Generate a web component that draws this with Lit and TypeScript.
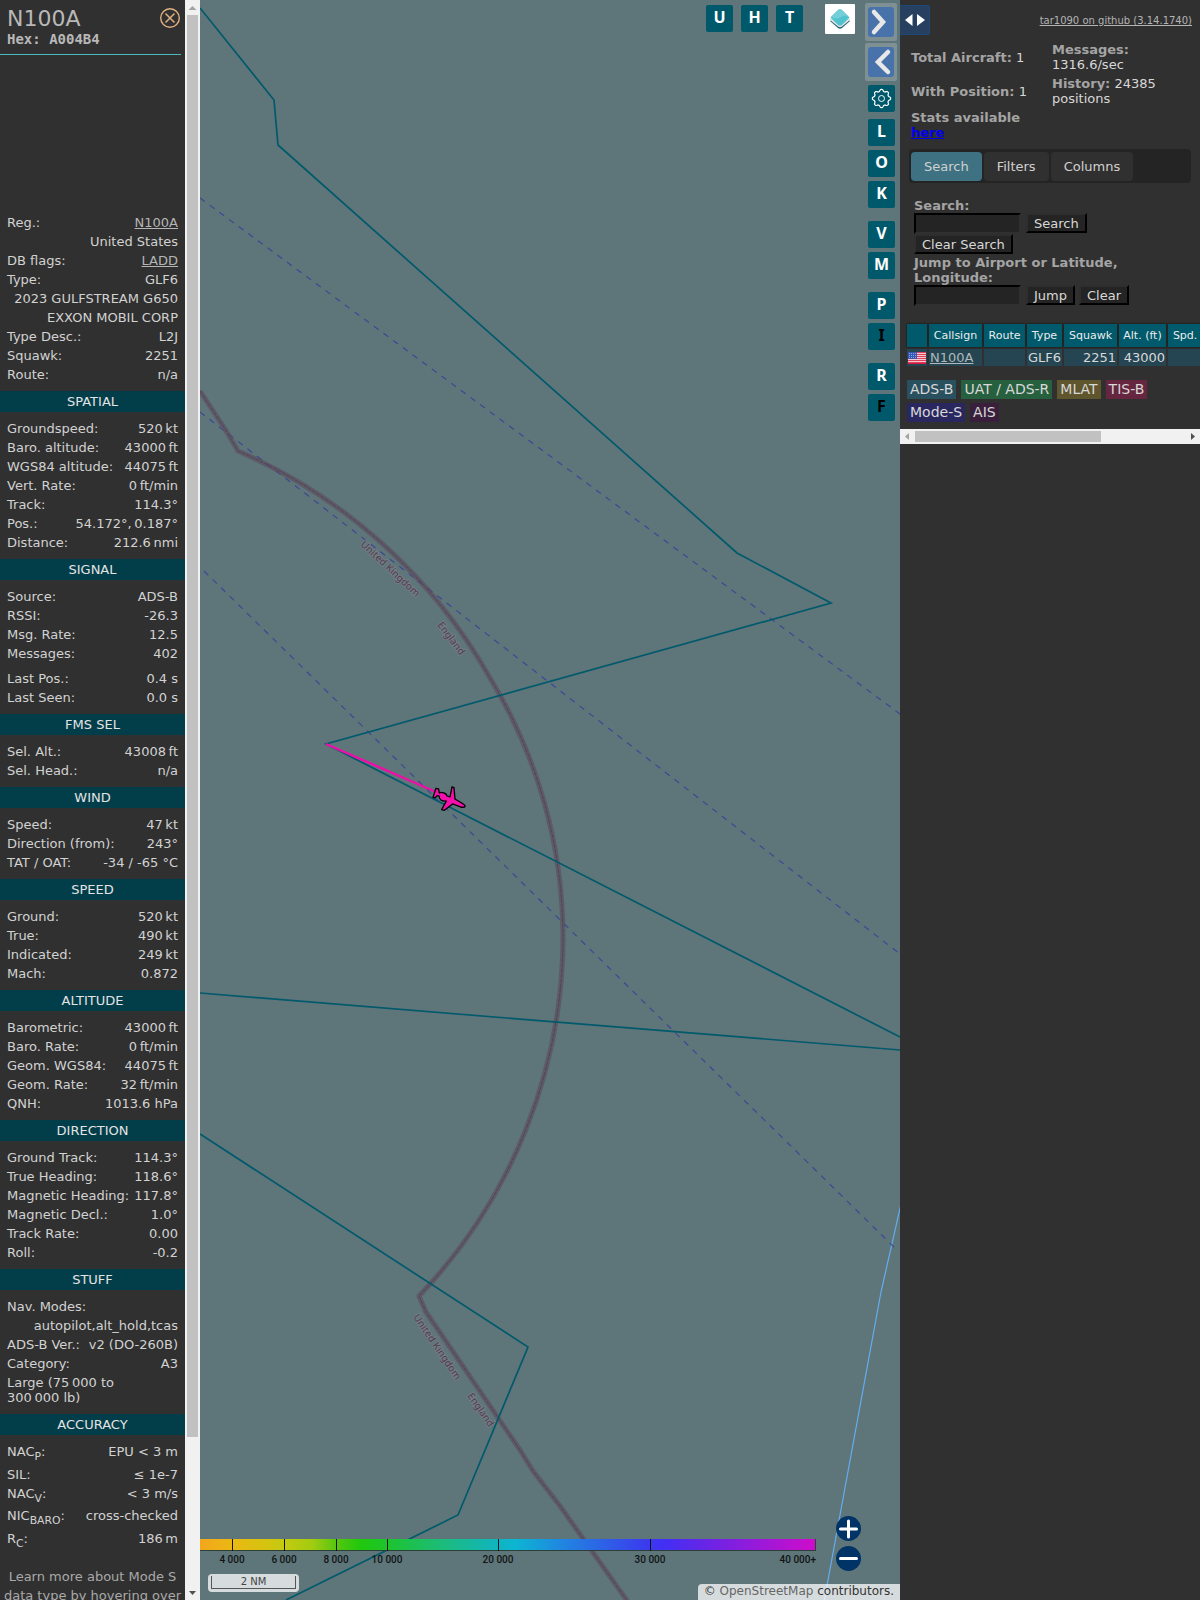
import { LitElement, html, css, svg } from "lit";
import { customElement } from "lit/decorators.js";
import { classMap } from "lit/directives/class-map.js";

type Row = { label?: unknown; value?: unknown; gap?: boolean };
type Section = { title?: string; rows: Row[] };

const thin = "\u2009";

const sections: Section[] = [
  {
    rows: [
      { label: "Reg.:", value: html`<a href="#reg">N100A</a>` },
      { value: "United States" },
      { label: "DB flags:", value: html`<a href="#ladd">LADD</a>` },
      { label: "Type:", value: "GLF6" },
      { value: "2023 GULFSTREAM G650" },
      { value: "EXXON MOBIL CORP" },
      { label: "Type Desc.:", value: "L2J" },
      { label: "Squawk:", value: "2251" },
      { label: "Route:", value: "n/a" },
    ],
  },
  {
    title: "SPATIAL",
    rows: [
      { label: "Groundspeed:", value: `520${thin}kt` },
      { label: "Baro. altitude:", value: `43000${thin}ft` },
      { label: "WGS84 altitude:", value: `44075${thin}ft` },
      { label: "Vert. Rate:", value: `0${thin}ft/min` },
      { label: "Track:", value: "114.3°" },
      { label: "Pos.:", value: `54.172°,${thin}0.187°` },
      { label: "Distance:", value: `212.6${thin}nmi` },
    ],
  },
  {
    title: "SIGNAL",
    rows: [
      { label: "Source:", value: "ADS-B" },
      { label: "RSSI:", value: "-26.3" },
      { label: "Msg. Rate:", value: "12.5" },
      { label: "Messages:", value: "402" },
      { label: "Last Pos.:", value: "0.4 s", gap: true },
      { label: "Last Seen:", value: "0.0 s" },
    ],
  },
  {
    title: "FMS SEL",
    rows: [
      { label: "Sel. Alt.:", value: `43008${thin}ft` },
      { label: "Sel. Head.:", value: "n/a" },
    ],
  },
  {
    title: "WIND",
    rows: [
      { label: "Speed:", value: `47${thin}kt` },
      { label: "Direction (from):", value: "243°" },
      { label: "TAT / OAT:", value: "-34 / -65 °C" },
    ],
  },
  {
    title: "SPEED",
    rows: [
      { label: "Ground:", value: `520${thin}kt` },
      { label: "True:", value: `490${thin}kt` },
      { label: "Indicated:", value: `249${thin}kt` },
      { label: "Mach:", value: "0.872" },
    ],
  },
  {
    title: "ALTITUDE",
    rows: [
      { label: "Barometric:", value: `43000${thin}ft` },
      { label: "Baro. Rate:", value: `0${thin}ft/min` },
      { label: "Geom. WGS84:", value: `44075${thin}ft` },
      { label: "Geom. Rate:", value: `32${thin}ft/min` },
      { label: "QNH:", value: "1013.6 hPa" },
    ],
  },
  {
    title: "DIRECTION",
    rows: [
      { label: "Ground Track:", value: "114.3°" },
      { label: "True Heading:", value: "118.6°" },
      { label: "Magnetic Heading:", value: "117.8°" },
      { label: "Magnetic Decl.:", value: "1.0°" },
      { label: "Track Rate:", value: "0.00" },
      { label: "Roll:", value: "-0.2" },
    ],
  },
  {
    title: "STUFF",
    rows: [
      { label: "Nav. Modes:" },
      { value: "autopilot,alt_hold,tcas" },
      { label: "ADS-B Ver.:", value: "v2 (DO-260B)" },
      { label: "Category:", value: "A3" },
      { label: html`Large (75${thin}000 to<br />300${thin}000 lb)` },
    ],
  },
  {
    title: "ACCURACY",
    rows: [
      { label: html`NAC<sub>P</sub>:`, value: "EPU < 3 m" },
      { label: "SIL:", value: "≤ 1e-7" },
      { label: html`NAC<sub>V</sub>:`, value: "< 3 m/s" },
      { label: html`NIC<sub>BARO</sub>:`, value: "cross-checked" },
      { label: html`R<sub>C</sub>:`, value: `186${thin}m` },
    ],
  },
];

@customElement("info-panel")
class InfoPanel extends LitElement {
  static styles = css`
    :host {
      display: flex;
      flex: none;
      width: 200px;
      min-height: 0;
      overflow: hidden;
      background: #303030;
      color: #d2d2d2;
      font: 13px/15px "DejaVu Sans", Verdana, sans-serif;
    }
    a { color: #b5b5b5; }
    .content { flex: 1; min-width: 0; overflow: hidden; }
    .head {
      display: flex;
      justify-content: space-between;
      align-items: flex-start;
      margin-right: 4px;
      padding: 7px 0 6px 7px;
      border-bottom: 1px solid #4fb9c2;
      color: #b8b8b8;
    }
    .title { margin: 0; font-size: 22px; line-height: 24px; font-weight: 400; }
    .hex { margin: 0; font: bold 14px/17px "DejaVu Sans Mono", monospace; }
    .close {
      width: 20px;
      height: 20px;
      margin: 1px 1px 0 0;
      padding: 0;
      border: 0;
      background: none;
    }
    .close svg { display: block; }
    .photo { height: 158px; }
    .band {
      margin: 7px 0;
      font: inherit;
      line-height: 21px;
      text-align: center;
      background: #023e4a;
      color: #e4e4e4;
    }
    .rows { margin: 0; padding: 0 7px; }
    .row {
      display: flex;
      justify-content: space-between;
      align-items: baseline;
      padding: 2px 0;
      white-space: nowrap;
    }
    .row.gap { margin-top: 6px; }
    dt, dd { margin: 0; }
    dd { margin-left: auto; }
    sub { font-size: smaller; line-height: 12px; }
    .more { margin: 16px 0 0; line-height: 19px; text-align: center; color: #a9a9a9; }
    .scroll {
      display: flex;
      flex-direction: column;
      align-items: center;
      width: 15px;
      background: #f1f1f1;
    }
    .scroll svg { flex: none; display: block; }
    .track { flex: 1; width: 11px; }
    .thumb { height: 90.6%; background: #c1c1c1; }
  `;

  render() {
    return html`
      <div class="content">
        <header class="head">
          <div>
            <h1 class="title">N100A</h1>
            <p class="hex">Hex: A004B4</p>
          </div>
          <button class="close" aria-label="Close">
            <svg width="20" height="20" fill="none" stroke="#e0b080">
              <circle cx="10" cy="10" r="9.3" stroke-width="1.4" />
              <path d="M5.5 5.5l9 9m0-9l-9 9" stroke-width="1.5" />
            </svg>
          </button>
        </header>
        <div class="photo"></div>
        ${sections.map(
          (s) => html`
            ${s.title ? html`<h2 class="band">${s.title}</h2>` : ""}
            <dl class="rows">
              ${s.rows.map(
                (r) => html`<div class=${classMap({ row: true, gap: !!r.gap })}>
                  ${r.label ? html`<dt>${r.label}</dt>` : ""}
                  ${r.value ? html`<dd>${r.value}</dd>` : ""}
                </div>`
              )}
            </dl>
          `
        )}
        <p class="more">Learn more about Mode S<br />data type by hovering over</p>
      </div>
      <div class="scroll">
        <svg width="15" height="15"><path d="M7.5 6l4 4h-8z" fill="#a3a3a3" /></svg>
        <div class="track"><div class="thumb"></div></div>
        <svg width="15" height="15"><path d="M4 6h7l-3.5 4z" fill="#505050" /></svg>
      </div>
    `;
  }
}

const toolButtons: { key: string; dark?: boolean; start?: boolean }[] = [
  { key: "L" },
  { key: "O" },
  { key: "K" },
  { key: "V", start: true },
  { key: "M" },
  { key: "P", start: true },
  { key: "I", dark: true },
  { key: "R", start: true },
  { key: "F", dark: true },
];

const altitudeTicks = [
  { x: 32, label: "4 000" },
  { x: 84, label: "6 000" },
  { x: 136, label: "8 000" },
  { x: 187, label: "10 000" },
  { x: 298, label: "20 000" },
  { x: 450, label: "30 000" },
];

const altitudeStops: [number, string][] = [
  [0, "#f3a61c"],
  [32, "#ebb813"],
  [62, "#d8c210"],
  [84, "#c4ca10"],
  [112, "#a2cc10"],
  [136, "#58c610"],
  [160, "#20c80c"],
  [187, "#1dc42c"],
  [240, "#1cbc78"],
  [298, "#10b4c0"],
  [315, "#0cb6d2"],
  [360, "#1f88e0"],
  [450, "#3c38ee"],
  [463, "#4030f4"],
  [520, "#7522e2"],
  [616, "#d00ccb"],
];

const gearPoints = Array.from({ length: 64 }, (_, i) => {
  const a = (i / 64) * Math.PI * 2;
  const r = 8.2 + 0.9 * Math.tanh(2.5 * Math.cos(a * 8));
  return `${(13.5 + r * Math.sin(a)).toFixed(2)},${(13.5 - r * Math.cos(a)).toFixed(2)}`;
}).join(" ");

@customElement("map-view")
class MapView extends LitElement {
  static styles = css`
    :host {
      display: block;
      position: relative;
      flex: 1;
      min-width: 0;
      overflow: hidden;
      background: #5e757a;
      font-family: "DejaVu Sans", Verdana, sans-serif;
    }
    button { padding: 0; border: 0; }
    svg { display: block; }
    .chart { position: absolute; inset: 0; width: 100%; height: 100%; }
    .route { fill: none; stroke: #005a6c; stroke-width: 1.7; }
    .limit { fill: none; stroke: #3e4894; stroke-width: 1.2; stroke-dasharray: 6 6; }
    .border { fill: none; stroke: #5c4a5c; stroke-opacity: 0.6; stroke-width: 5; stroke-linejoin: round; }
    .border-line { fill: none; stroke: #573f55; stroke-width: 1; stroke-dasharray: 4 1; }
    .coast { fill: none; stroke: #62aef0; stroke-width: 1.2; }
    .flown { fill: none; stroke: #ee0fa8; stroke-width: 2.4; }
    .place {
      font: 10px "Noto Sans", sans-serif;
      fill: #523a4e;
      stroke: #85868e;
      stroke-width: 2;
      stroke-opacity: 0.5;
      paint-order: stroke;
    }
    .key {
      width: 27px;
      height: 27px;
      border-radius: 2px;
      padding-bottom: 4px;
      background: #00596b;
      color: #fff;
      font: bold 16px/20px "Noto Sans", sans-serif;
      text-align: center;
    }
    .key.dark { color: #000; }
    .key.start { margin-top: 9px; }
    .key.gear { margin-bottom: 3px; padding: 0; }
    .top {
      position: absolute;
      top: 4px;
      right: 45px;
      display: flex;
      align-items: flex-start;
      gap: 14px;
    }
    .keys { display: flex; gap: 8px; padding: 1px 8px 0 0; }
    .layers {
      display: grid;
      place-items: center;
      width: 30px;
      height: 30px;
      border-radius: 1px;
      background: #fff;
    }
    .side {
      position: absolute;
      top: 3px;
      right: 3px;
      display: grid;
      gap: 4px;
    }
    .arrows { display: grid; gap: 2px; }
    .arrow {
      width: 32px;
      height: 38px;
      padding: 4px 3px;
      border-radius: 2px;
      background: #7f9095;
    }
    .side .key { margin-left: 3px; }
    .scale-bar {
      position: absolute;
      left: 8px;
      bottom: 8px;
      padding: 2px 3px 3px;
      border-radius: 4px;
      background: rgba(255, 255, 255, 0.75);
    }
    .scale-line {
      width: 83px;
      height: 12px;
      border: 1px solid #555;
      border-top: 0;
      font-size: 10px;
      line-height: 12px;
      text-align: center;
      color: #444;
    }
    .legend { position: absolute; left: 0; bottom: 32px; }
    .legend text { font: 500 10px Roboto, "Liberation Sans", sans-serif; fill: #101414; }
    .zoom {
      position: absolute;
      right: 39px;
      bottom: 29px;
      display: grid;
      gap: 5px;
    }
    .zoom button { width: 25px; height: 25px; border-radius: 50%; background: #003466; }
    .credit {
      position: absolute;
      right: 0;
      bottom: 0;
      padding: 0 6px 1px;
      border-radius: 4px 0 0 0;
      background: rgba(255, 255, 255, 0.75);
      font-size: 12px;
      line-height: 15px;
      white-space: nowrap;
      color: #333;
    }
    .credit a { color: #666; text-decoration: none; }
  `;

  render() {
    const border =
      "M200 391L225 429L238 451A532 532 0 0 1 490 678A500 500 0 0 1 563 936A521 521 0 0 1 419 1296L426 1312L520 1450L533 1471L560 1506L628 1602";
    return html`
      <svg class="chart" viewBox="200 0 700 1600" preserveAspectRatio="xMinYMin slice">
        <path class="coast" d="M901 1204L881 1292L824 1602" />
        <path class="limit" d="M200 198L900 714" />
        <path class="limit" d="M200 412L900 954" />
        <path class="limit" d="M204 571L897 1250" />
        <path class="border" d=${border} />
        <path class="border-line" d=${border} />
        <text class="place" transform="translate(360 545) rotate(43)">United Kingdom</text>
        <text class="place" transform="translate(437 625) rotate(53)">England</text>
        <text class="place" transform="translate(413 1317) rotate(56)">United Kingdom</text>
        <text class="place" transform="translate(467 1396) rotate(55)">England</text>
        <path class="route" d="M200 8L274 100L278 145L737 553L831 603L326 744L900 1037" />
        <path class="route" d="M200 993L900 1050" />
        <path class="route" d="M200 1134L528 1347L458 1515L286 1600" />
        <path class="flown" d="M326 744L436 792" />
        <g transform="translate(310 700) scale(.3333)">
          <path
            fill="#f310ac"
            stroke="#000"
            stroke-width="4"
            stroke-linejoin="round"
            d="M378 265L386 267L388 279Q394 275 402 279Q410 281 411 288L420 291L426 261L432 263L435 297L460 312Q468 317 464 321L455 322L428 312L403 331L395 329L409 303Q401 305 393 300Q387 295 387 288L382 287L374 294L369 292Z"
          />
        </g>
      </svg>

      <div class="top">
        <div class="keys">${["U", "H", "T"].map((k) => html`<button class="key">${k}</button>`)}</div>
        <button class="layers" aria-label="Layers">
          <svg width="22" height="22">
            <path d="M1 13L9 6q2-1.5 4 0l8 7-8 7q-2 1.5-4 0z" fill="#1c5f6c" />
            <path d="M1 11L9 4q2-1.5 4 0l8 7v1l-8 6.5q-2 1.5-4 0L1 12z" fill="#e4e4e4" />
            <path d="M1.5 9.5L9 2q2-1.5 4 0l7.5 7.5L13 17q-2 1.5-4 0z" fill="#51c3cf" />
            <path d="M2 9L9 2q2-1.5 4 0l7 7q-4-3-8 0t-10 0z" fill="#74ced8" />
          </svg>
        </button>
      </div>

      <div class="side">
        <div class="arrows">
          ${["M6 5L15 15L6 25", "M20 5L10 15L20 25"].map(
            (d, i) => html`<button class="arrow" aria-label=${i ? "Expand" : "Collapse"}>
              <svg width="26" height="30">
                <rect width="26" height="30" rx="3" fill="#4773aa" />
                ${svg`<path d=${d} fill="none" stroke="#e8e8e8" stroke-width="4.5" stroke-linecap="round" />`}
              </svg>
            </button>`
          )}
        </div>
        <button class="key gear" aria-label="Settings">
          <svg width="27" height="27" fill="none" stroke="#fff">
            <polygon points=${gearPoints} stroke-width="1.2" />
            <circle cx="13.5" cy="13.5" r="3" />
          </svg>
        </button>
        ${toolButtons.map(
          (b) => html`<button class=${classMap({ key: true, dark: !!b.dark, start: !!b.start })}>${b.key}</button>`
        )}
      </div>

      <svg class="legend" width="620" height="30">
        <defs>
          <linearGradient id="altitude" gradientUnits="userSpaceOnUse" x1="0" x2="616" y1="0" y2="0">
            ${altitudeStops.map(([x, c]) => svg`<stop offset=${x / 616} stop-color=${c} />`)}
          </linearGradient>
        </defs>
        <rect y="1" width="616" height="12" fill="#2c4038" />
        <rect width="615" height="11" y="1" fill="url(#altitude)" />
        ${altitudeTicks.map(
          (t) => svg`
            <path d=${`M${t.x + 0.5} 1v12`} stroke="#111" />
            <text x=${t.x} y="25" text-anchor="middle">${t.label}</text>`
        )}
        <text x="616" y="25" text-anchor="end">40 000+</text>
      </svg>

      <div class="scale-bar"><div class="scale-line">2 NM</div></div>

      <div class="zoom">
        <button aria-label="Zoom in">
          <svg width="25" height="25"><path d="M4.5 13h16M12.5 5v16" stroke="#fff" stroke-width="3" stroke-linecap="round" /></svg>
        </button>
        <button aria-label="Zoom out">
          <svg width="25" height="25"><path d="M4.5 12.5h16" stroke="#fff" stroke-width="3" stroke-linecap="round" /></svg>
        </button>
      </div>

      <div class="credit">© <a href="#osm">OpenStreetMap</a> contributors.</div>
    `;
  }
}

const stripes = Array.from({ length: 6 }, (_, i) => i * 2);

@customElement("aircraft-list")
class AircraftList extends LitElement {
  static styles = css`
    :host {
      display: flex;
      flex-direction: column;
      position: relative;
      width: 25%;
      min-width: 0;
      overflow: hidden;
      background: #303030;
      color: #d8d8d8;
      font: 13px/15px "DejaVu Sans", Verdana, sans-serif;
    }
    .toggle {
      position: absolute;
      top: 5px;
      left: 0;
      width: 30px;
      height: 30px;
      padding: 0;
      border: 1px solid #1d4776;
      border-left: 0;
      border-radius: 0 2px 2px 0;
      background: #28405f;
    }
    .toggle svg { display: block; }
    .version {
      align-self: flex-end;
      margin: 14px 8px 15px 0;
      font-size: 10px;
      line-height: 13px;
      color: #b4b4b4;
    }
    .stats {
      display: grid;
      grid-template-columns: 1fr 1fr;
      gap: 4px;
      align-items: center;
      margin: 0 11px 9px 11px;
    }
    b, label { color: #a4a4a4; font-weight: bold; }
    .here { color: #0000ee; font-weight: bold; }
    .tabs {
      display: flex;
      gap: 2px;
      margin: 0 9px 15px;
      padding: 3px 2px 2px;
      border-radius: 4px;
      background: #242424;
    }
    .tab {
      padding: 7px 13px;
      border: 0;
      border-radius: 4px;
      background: #303030;
      color: #d0d0d0;
      font: inherit;
    }
    .tab.active { background: #3e7282; }
    .form {
      display: flex;
      flex-wrap: wrap;
      align-items: center;
      padding: 0 60px 0 14px;
    }
    .form + .form { padding-right: 30px; }
    label { flex: 0 0 100%; }
    input {
      box-sizing: border-box;
      width: 107px;
      height: 21px;
      margin-right: 5px;
      border: 2px solid;
      border-color: #000 #303030 #303030 #000;
      background: #242424;
      color: #d8d8d8;
      font: inherit;
    }
    .action {
      height: 20px;
      margin: 0 4px 1px 0;
      padding: 0 6px;
      border: 2px solid;
      border-color: #2e2e2e #000 #000 #2e2e2e;
      background: #242424;
      color: #d8d8d8;
      font: inherit;
    }
    .table-box { overflow: hidden; margin: 16px 0 12px 5px; }
    table { width: 322px; border-collapse: separate; border-spacing: 2px; table-layout: fixed; }
    th {
      height: 23px;
      padding: 0;
      background: #005a6b;
      box-shadow: 0 0 2px #111;
      color: #ececec;
      font-size: 11px;
      font-weight: 400;
      white-space: nowrap;
    }
    td { height: 17px; padding: 0 1px; background: #254552; white-space: nowrap; }
    td a { color: #b0b8bb; }
    td.num { text-align: right; }
    td svg { display: block; }
    .c-flag { width: 20px; }
    .c-call { width: 53px; }
    .c-route { width: 41px; }
    .c-type { width: 35px; }
    .c-sqk { width: 53px; }
    .c-alt { width: 47px; }
    .sources {
      display: flex;
      flex-wrap: wrap;
      gap: 4px 5px;
      margin: 0 40px 7px 7px;
      padding: 0;
      list-style: none;
      font-size: 14px;
      line-height: 19px;
    }
    .sources li { padding: 0 3px; }
    .adsb { background: #29505f; }
    .uat { background: #27603f; }
    .mlat { background: #60562d; }
    .tisb { background: #66263f; }
    .modes { background: #2a2760; }
    .ais { background: #391f3c; }
    .scroll { display: flex; align-items: center; height: 15px; background: #f1f1f1; }
    .scroll svg { flex: none; }
    .track { flex: 1; }
    .thumb { width: 69%; height: 11px; background: #c1c1c1; }
  `;

  render() {
    return html`
      <button class="toggle" aria-label="Resize">
        <svg width="30" height="28"><path d="M12.5 8v12L5 14zM17 8v12l8-6z" fill="#fff" /></svg>
      </button>
      <a class="version" href="#github">tar1090 on github (3.14.1740)</a>

      <div class="stats">
        <div><b>Total Aircraft:</b> 1</div>
        <div><b>Messages:</b><br />1316.6/sec</div>
        <div><b>With Position:</b> 1</div>
        <div><b>History:</b> 24385 positions</div>
        <div><b>Stats available</b><br /><a class="here" href="#stats">here</a></div>
      </div>

      <nav class="tabs">
        <button class="tab active">Search</button>
        <button class="tab">Filters</button>
        <button class="tab">Columns</button>
      </nav>

      <form class="form">
        <label for="search">Search:</label>
        <input id="search" type="text" />
        <button class="action" type="button">Search</button>
        <button class="action" type="button">Clear Search</button>
      </form>
      <form class="form">
        <label for="jump">Jump to Airport or Latitude, Longitude:</label>
        <input id="jump" type="text" />
        <button class="action" type="button">Jump</button>
        <button class="action" type="button">Clear</button>
      </form>

      <div class="table-box">
        <table>
          <thead>
            <tr>
              <th class="c-flag"></th>
              <th class="c-call">Callsign</th>
              <th class="c-route">Route</th>
              <th class="c-type">Type</th>
              <th class="c-sqk">Squawk</th>
              <th class="c-alt">Alt. (ft)</th>
              <th>Spd. (kt)</th>
            </tr>
          </thead>
          <tbody>
            <tr>
              <td>
                <svg width="18" height="12">
                  <rect width="18" height="12" fill="#f3c9cf" />
                  ${stripes.map((y) => svg`<rect y=${y} width="18" height="1" fill="#e0405c" />`)}
                  <rect y="11" width="18" height="1" fill="#d8183c" />
                  <rect width="9" height="7" fill="#3458b4" />
                  <path d="M1 1.5h8M1 3.5h8M1 5.5h8" stroke="#8fa2da" stroke-dasharray="1 1" />
                </svg>
              </td>
              <td><a href="#N100A">N100A</a></td>
              <td></td>
              <td>GLF6</td>
              <td class="num">2251</td>
              <td class="num">43000</td>
              <td></td>
            </tr>
          </tbody>
        </table>
      </div>

      <ul class="sources">
        <li class="adsb">ADS-B</li>
        <li class="uat">UAT / ADS-R</li>
        <li class="mlat">MLAT</li>
        <li class="tisb">TIS-B</li>
        <li class="modes">Mode-S</li>
        <li class="ais">AIS</li>
      </ul>

      <div class="scroll">
        <svg width="15" height="15"><path d="M9 4v7L5 7.5z" fill="#a3a3a3" /></svg>
        <div class="track"><div class="thumb"></div></div>
        <svg width="15" height="15"><path d="M6 4v7l4-3.5z" fill="#505050" /></svg>
      </div>
    `;
  }
}

@customElement("app-root")
class AppRoot extends LitElement {
  static styles = css`
    :host {
      display: flex;
      height: 100vh;
      overflow: hidden;
      background: #303030;
    }
  `;

  render() {
    return html`
      <info-panel></info-panel>
      <map-view></map-view>
      <aircraft-list></aircraft-list>
    `;
  }
}
